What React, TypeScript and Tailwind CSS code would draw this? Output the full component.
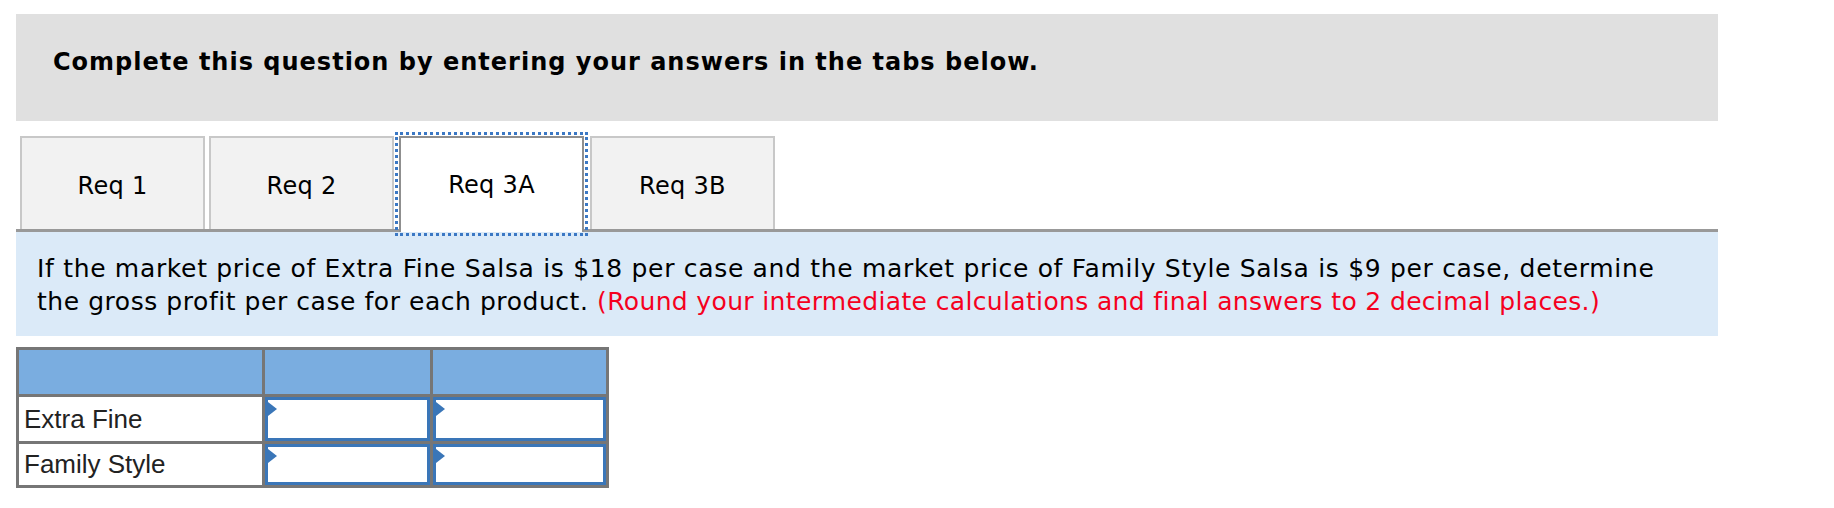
import React from "react";

const tabs = ["Req 1", "Req 2", "Req 3A", "Req 3B"];

function Flag() {
  return (
    <svg
      className="absolute left-0 top-[2px]"
      width="10"
      height="14"
      viewBox="0 0 10 14"
    >
      <polygon points="0,0 9,7 0,14" fill="#3a76b8" />
    </svg>
  );
}

function InputCell() {
  return (
    <div className="relative bg-white border-[3px] border-[#3a76b8]">
      <Flag />
    </div>
  );
}

export default function App() {
  return (
    <div className="w-[1834px] h-[508px] bg-white pl-[16px] pt-[14px] font-['DejaVu_Sans',Verdana,sans-serif] text-black">
      <div className="w-[1702px]">
        <div className="h-[107px] bg-[#e0e0e0] pl-[37px] pt-[33px]">
          <h2 className="text-[24px] font-bold leading-[30px] tracking-[1px]">
            Complete this question by entering your answers in the tabs below.
          </h2>
        </div>

        <div className="mt-[15px] flex items-end border-b-[3px] border-[#999999] pl-[4px] h-[96px]">
          {tabs.map((t, i) =>
            i === 2 ? (
              <div
                key={t}
                className="relative z-10 -mb-[3px] ml-[1px] mr-[6px] h-[96px] w-[185px] bg-white border-2 border-b-0 border-[#8f8f8f] outline-dotted outline-[3px] outline-offset-[1px] outline-[#3b78c4] flex items-center justify-center text-[24px] tracking-[0.3px]"
              >
                {t}
              </div>
            ) : (
              <div
                key={t}
                className="mr-[4px] h-[93px] w-[185px] bg-[#f2f2f2] border-2 border-b-0 border-[#c8c8c8] flex items-center justify-center pt-[4px] text-[24px] tracking-[0.3px]"
              >
                {t}
              </div>
            )
          )}
        </div>

        <div className="bg-[#dbeaf8] px-[21px] pt-[20px] pb-[18px] text-[25px] leading-[33px] tracking-[0.68px]">
          If the market price of Extra Fine Salsa is $18 per case and the market
          price of Family Style Salsa is $9 per case, determine
          <br />
          <span className="tracking-[0.55px]">
            the gross profit per case for each product.
          </span>{" "}
          <span className="text-[#f5001e] tracking-[0.35px]">
            (Round your intermediate calculations and final answers to 2 decimal
            places.)
          </span>
        </div>

        <div className="mt-[11px] w-[593px] border-[3px] border-[#767676] bg-[#767676] grid grid-cols-[243px_165px_173px] grid-rows-[44px_44px_41px] gap-[3px] font-['Liberation_Sans',Arial,sans-serif] text-[26px] text-[#222222]">
          <div className="bg-[#7aade0]" />
          <div className="bg-[#7aade0]" />
          <div className="bg-[#7aade0]" />

          <div className="bg-white flex items-center pl-[5px]">Extra Fine</div>
          <InputCell />
          <InputCell />

          <div className="bg-white flex items-center pl-[5px]">Family Style</div>
          <InputCell />
          <InputCell />
        </div>
      </div>
    </div>
  );
}
